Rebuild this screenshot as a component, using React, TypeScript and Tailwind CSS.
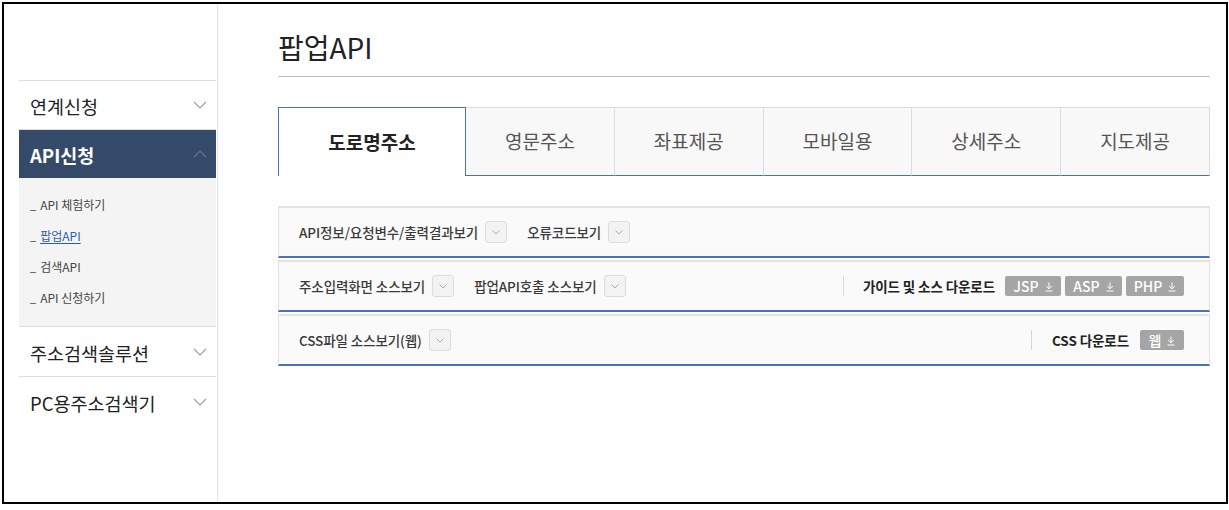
import React from "react";

const FONT = { fontFamily: '"Noto Sans CJK KR", "Noto Sans", sans-serif' };

function ChevronDown({ className = "" }: { className?: string }) {
  return (
    <svg width="14" height="8" viewBox="0 0 14 8" className={className} fill="none">
      <path d="M1 1 L7 7 L13 1" stroke="currentColor" strokeWidth="1.2" />
    </svg>
  );
}
function ChevronUp({ className = "" }: { className?: string }) {
  return (
    <svg width="14" height="8" viewBox="0 0 14 8" className={className} fill="none">
      <path d="M1 7 L7 1 L13 7" stroke="currentColor" strokeWidth="1.2" />
    </svg>
  );
}

function Toggle() {
  return (
    <span className="ml-[7px] inline-flex h-[22px] w-[22px] items-center justify-center rounded-[3px] border border-[#dcdcdc] bg-[#f3f3f3] text-[#aaa]">
      <svg width="8" height="5" viewBox="0 0 8 5" fill="none">
        <path d="M0.5 0.5 L4 4 L7.5 0.5" stroke="currentColor" strokeWidth="1" />
      </svg>
    </span>
  );
}

function DlIcon() {
  return (
    <svg width="8" height="10" viewBox="0 0 8 10" fill="none" className="ml-[6px] mt-[2px]">
      <path d="M4 0.5 V6.5 M1.2 4 L4 6.8 L6.8 4 M0.5 9 H7.5" stroke="currentColor" strokeWidth="1" />
    </svg>
  );
}

function DlButton({ label, w }: { label: string; w: string }) {
  return (
    <span
      className={`inline-flex h-[20px] ${w} items-center justify-center rounded-[2px] bg-[#a5a5a5] text-[14px] font-medium text-white`}
    >
      <span className="leading-none">{label}</span>
      <DlIcon />
    </span>
  );
}

function SideItem({ label, tall }: { label: string; tall?: boolean }) {
  return (
    <div
      className={`flex ${tall ? "h-[50px]" : "h-[49px]"} items-center justify-between border-t border-[#dddddd] pl-[11px] pr-[9px]`}
    >
      <span className="pt-[4px] text-[18.5px] text-[#222]">{label}</span>
      <ChevronDown className="text-[#a0a0a0]" />
    </div>
  );
}

function SubItem({ label, active }: { label: string; active?: boolean }) {
  return (
    <div className="flex h-[31px] items-center pl-[11px] text-[12px] text-[#444]">
      <span className="mr-[4px] text-[11px] leading-none text-[#333]">_</span>
      {active ? (
        <span className="text-[#2b5bb8] underline underline-offset-2">{label}</span>
      ) : (
        <span>{label}</span>
      )}
    </div>
  );
}

const tabs = ["영문주소", "좌표제공", "모바일용", "상세주소", "지도제공"];

const panel =
  "flex h-[52px] items-center border-x border-t-2 border-b-2 border-x-[#e2e2e2] border-t-[#e2e2e2] border-b-[#4a70c6] bg-[#fafafa] pl-[20px] pr-[25px] text-[13.5px] font-medium tracking-[-0.1px] text-[#3a3a3a]";

export default function App() {
  return (
    <div className="h-[510px] w-[1229px] bg-white pl-[2px] pt-[2px]" style={FONT}>
      <div className="flex h-[502px] w-[1226px] border-2 border-black">
        {/* Sidebar */}
        <aside className="w-[214px] shrink-0 border-r border-[#e4e4e4] pl-[15px] pt-[76px]">
          <div className="w-[197px]">
            <SideItem label="연계신청" />
            <div className="flex h-[49px] items-center justify-between border-t border-[#dddddd] bg-[#354a69] pl-[11px] pr-[9px]">
              <span className="pt-[4px] text-[18.5px] font-bold text-white">API신청</span>
              <ChevronUp className="text-[#66758e]" />
            </div>
            <div className="bg-[#f4f4f4] pb-[13px] pt-[11px]">
              <SubItem label="API 체험하기" />
              <SubItem label="팝업API" active />
              <SubItem label="검색API" />
              <SubItem label="API 신청하기" />
            </div>
            <SideItem label="주소검색솔루션" tall />
            <SideItem label="PC용주소검색기" tall />
          </div>
        </aside>

        {/* Main */}
        <main className="flex-1 pl-[60px]">
          <div className="w-[932px]">
            <div className="border-b border-[#bbbbbb] pb-[10px] pt-[25px]">
              <h1 className="text-[28px] leading-[37px] text-[#222]">팝업API</h1>
            </div>

            {/* Tabs */}
            <div className="mt-[30px] flex h-[69px]">
              <div className="flex w-[188px] items-center justify-center border-x border-t border-[#4a70c6] bg-white text-[19px] font-bold text-[#222]">
                도로명주소
              </div>
              {tabs.map((t) => (
                <div
                  key={t}
                  className="flex flex-1 items-center justify-center border-b border-t border-r border-b-[#4a70c6] border-t-[#dddddd] border-r-[#dddddd] bg-[#f8f8f8] text-[19px] text-[#555]"
                >
                  {t}
                </div>
              ))}
            </div>

            {/* Panels */}
            <div className="mt-[30px] flex flex-col gap-[2px]">
              <div className={panel}>
                <span>API정보/요청변수/출력결과보기</span>
                <Toggle />
                <span className="ml-[20px]">오류코드보기</span>
                <Toggle />
              </div>

              <div className={panel}>
                <span>주소입력화면 소스보기</span>
                <Toggle />
                <span className="ml-[20px]">팝업API호출 소스보기</span>
                <Toggle />
                <div className="ml-auto flex items-center">
                  <span className="mr-[19px] h-[20px] w-px bg-[#d8d8d8]" />
                  <span className="mr-[10px] font-bold text-[#222]">가이드 및 소스 다운로드</span>
                  <div className="flex gap-[4px] tracking-normal">
                    <DlButton label="JSP" w="w-[56px]" />
                    <DlButton label="ASP" w="w-[57px]" />
                    <DlButton label="PHP" w="w-[58px]" />
                  </div>
                </div>
              </div>

              <div className={panel}>
                <span>CSS파일 소스보기(웹)</span>
                <Toggle />
                <div className="ml-auto flex items-center">
                  <span className="mr-[20px] h-[20px] w-px bg-[#d8d8d8]" />
                  <span className="mr-[11px] font-bold text-[#222]">CSS 다운로드</span>
                  <DlButton label="웹" w="w-[44px]" />
                </div>
              </div>
            </div>
          </div>
        </main>
      </div>
    </div>
  );
}
